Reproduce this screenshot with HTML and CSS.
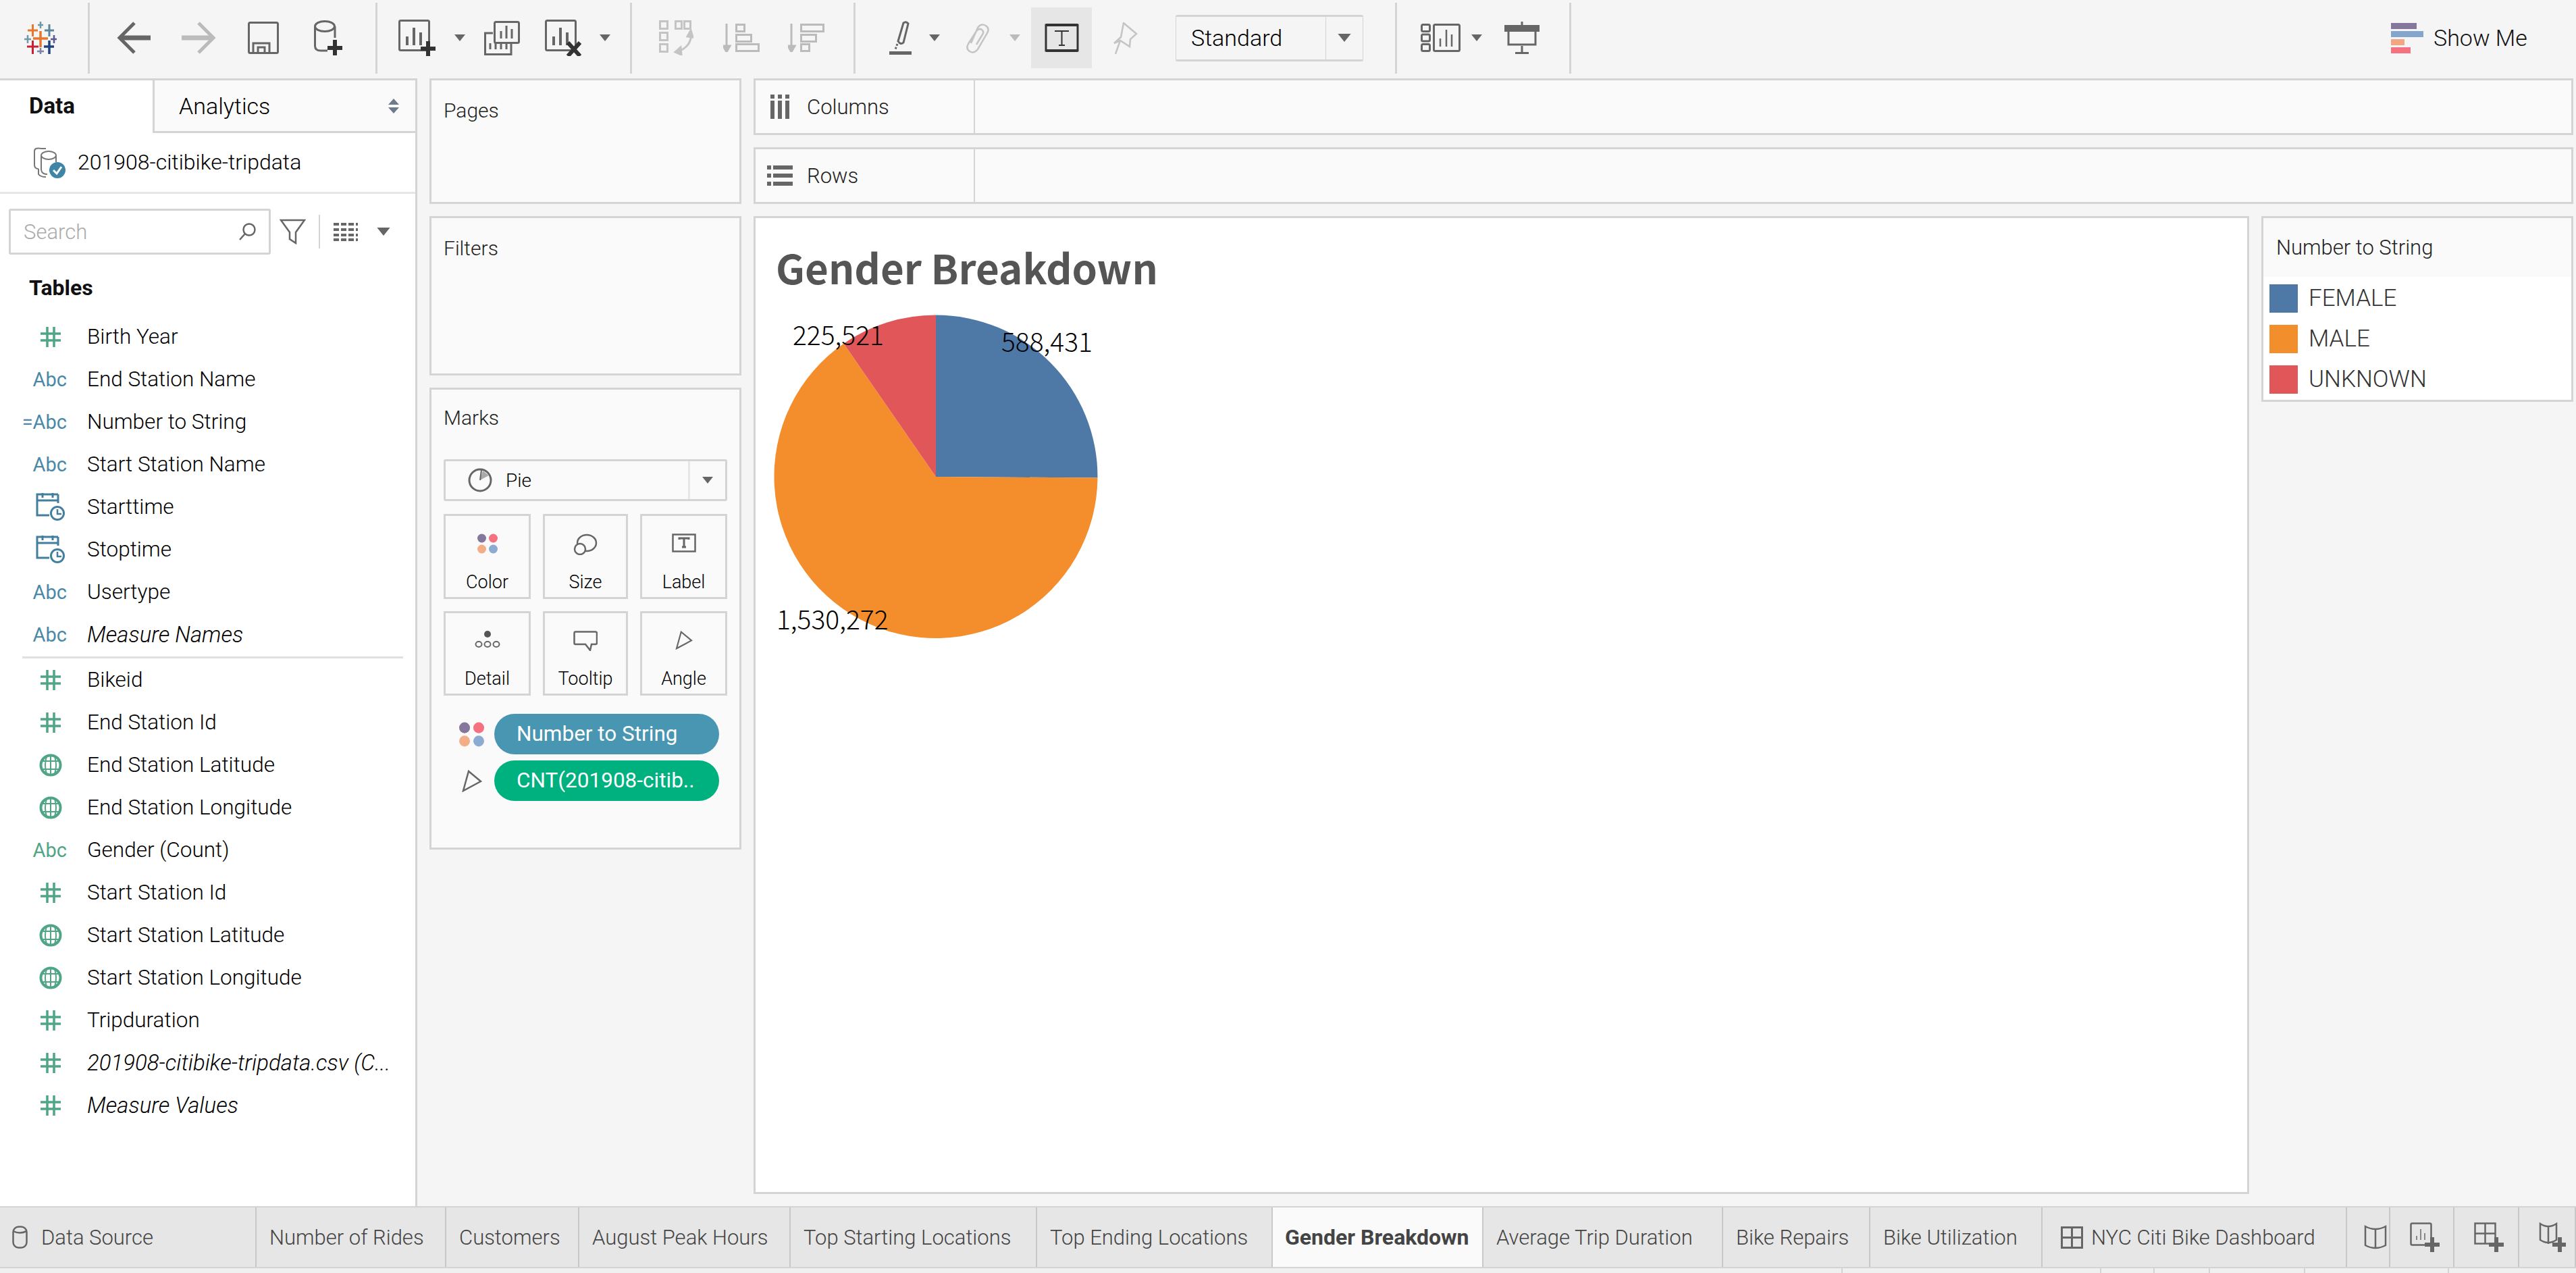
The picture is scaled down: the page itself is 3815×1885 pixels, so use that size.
FILE: index.html
```html
<!DOCTYPE html>
<html lang="en">
<head>
    <meta charset="UTF-8">
    <title>Gender Breakdown</title>
    <link rel="stylesheet" href="styles.css">
</head>
<body>

    <!-- shared icons -->
    <svg class="defs" width="0" height="0">
        <symbol id="hash" viewBox="0 0 30 30">
            <path d="M10 0V30M20 0V30M0 10H30M0 20H30" fill="none" stroke="#4fa585" stroke-width="3.5"/>
        </symbol>
        <symbol id="globe" viewBox="0 0 34 34">
            <circle cx="17" cy="17" r="14.5" fill="none" stroke="#4fa585" stroke-width="4"/>
            <path d="M3 11H31M3 23H31M17 3V31M11 4Q7 17 11 30M23 4Q27 17 23 30" fill="none" stroke="#4fa585" stroke-width="2"/>
        </symbol>
        <symbol id="cal" viewBox="0 0 44 42">
            <path d="M33 2H2V33H20M2 11H33M33 2V15M10 0V7M25 0V7" fill="none" stroke="#427f9f" stroke-width="3"/>
            <circle cx="32" cy="30" r="9.5" fill="#fff" stroke="#427f9f" stroke-width="3"/>
            <path d="M32 24V31H38" fill="none" stroke="#427f9f" stroke-width="2.5"/>
        </symbol>
        <symbol id="dots" viewBox="0 0 30 30">
            <ellipse cx="6.500" cy="7" rx="6.500" ry="6.500" fill="#85769b"/>
            <ellipse cx="23.500" cy="7" rx="6.500" ry="6.500" fill="#f6717f"/>
            <ellipse cx="6.500" cy="23" rx="6.500" ry="6.500" fill="#f3ae88"/>
            <ellipse cx="23.500" cy="23" rx="6.500" ry="6.500" fill="#8cabd0"/>
        </symbol>
        <symbol id="angle" viewBox="0 0 30 33">
            <path d="M2 31L10 2L28 17Z" fill="none" stroke="#666" stroke-width="2.500"/>
        </symbol>
        <symbol id="arrow" viewBox="0 0 16 10">
            <path d="M0 0H16L8 10Z" fill="#666"/>
        </symbol>
    </svg>

    <header class="toolbar">
        <svg class="ic" width="48" height="48" viewBox="0 0 48 48">
            <path d="M24 0V10M20 5H28" stroke="#7099a6" stroke-width="2.500"/>
            <path d="M12.500 4V22M5 13H20" stroke="#e8762c" stroke-width="3"/>
            <path d="M37 4V22M30 13H44" stroke="#5b879b" stroke-width="3"/>
            <path d="M24 14V38M13 25H35" stroke="#e8762c" stroke-width="3.500"/>
            <path d="M5 20V32M0 26H10" stroke="#7099a6" stroke-width="2.500"/>
            <path d="M44 20V32M39 26H48" stroke="#59598f" stroke-width="2.500"/>
            <path d="M12.500 28V48M4 37H21" stroke="#c72037" stroke-width="3"/>
            <path d="M37 28V48M29 37H44" stroke="#1f457e" stroke-width="3.500"/>
            <path d="M24 39V48M19 44H29" stroke="#7e84a8" stroke-width="2.500"/>
        </svg>
        <span class="sep"></span>
        <svg class="ic" width="50" height="48" viewBox="0 0 50 48">
            <path d="M26 2L4 24L26 46" fill="none" stroke="#666" stroke-width="5"/>
            <path d="M4 24H50" stroke="#666" stroke-width="7"/>
        </svg>
        <svg class="ic" width="51" height="48" viewBox="0 0 51 48">
            <path d="M25 2L47 24L25 46" fill="none" stroke="#bbb" stroke-width="5"/>
            <path d="M0 24H47" stroke="#bbb" stroke-width="7"/>
        </svg>
        <svg class="ic" width="46" height="48" viewBox="0 0 46 48">
            <rect x="1.500" y="1.500" width="43" height="45" rx="2" fill="none" stroke="#666" stroke-width="3"/>
            <path d="M8 46V32H32V46M15 46V38H25V46" fill="none" stroke="#666" stroke-width="3"/>
        </svg>
        <svg class="ic" width="42" height="52" viewBox="0 0 42 52">
            <path d="M1.500 9V38Q1.500 45 10 45H20M31 9V26" fill="none" stroke="#666" stroke-width="3"/>
            <ellipse cx="16" cy="9" rx="14.500" ry="7.500" fill="none" stroke="#666" stroke-width="3"/>
            <path d="M31 29V52M20 41H42" stroke="#333" stroke-width="6"/>
        </svg>
        <span class="sep"></span>
        <svg class="ic" width="55" height="54" viewBox="0 0 55 54">
            <rect x="1.500" y="1.500" width="44" height="44" rx="2" fill="none" stroke="#666" stroke-width="3"/>
            <path d="M13 38V25M23 38V12M33 38V19" stroke="#666" stroke-width="4"/>
            <path d="M44 32V54M33 43H55" stroke="#333" stroke-width="6"/>
        </svg>
        <svg class="ic" width="16" height="10"><use href="#arrow"/></svg>
        <svg class="ic" width="53" height="51" viewBox="0 0 53 51">
            <path d="M13 18H1.500V49.500H40V34" fill="none" stroke="#666" stroke-width="3"/>
            <path d="M9 42V33M17 42V33M25 42V33M33 42V33" stroke="#666" stroke-width="3"/>
            <rect x="15.500" y="1.500" width="36" height="31" rx="2" fill="#f5f5f5" stroke="#666" stroke-width="3"/>
            <path d="M25 26V15M33 26V7M41 26V12" stroke="#666" stroke-width="3"/>
        </svg>
        <svg class="ic" width="54" height="54" viewBox="0 0 54 54">
            <rect x="1.500" y="1.500" width="44" height="44" rx="2" fill="none" stroke="#666" stroke-width="3"/>
            <path d="M13 38V25M23 38V12M33 38V19" stroke="#666" stroke-width="4"/>
            <path d="M34 34L52 54M52 34L34 54" stroke="#333" stroke-width="6"/>
        </svg>
        <svg class="ic" width="16" height="10"><use href="#arrow"/></svg>
        <span class="sep"></span>
        <svg class="ic" width="51" height="52" viewBox="0 0 51 52" fill="none" stroke="#c4c4c4" stroke-width="3">
            <rect x="1.500" y="1.500" width="11" height="11"/>
            <rect x="1.500" y="18.500" width="11" height="11"/>
            <rect x="1.500" y="35.500" width="11" height="11"/>
            <rect x="24.500" y="1.500" width="9" height="11"/>
            <rect x="37.500" y="1.500" width="9" height="11"/>
            <path d="M47 18Q50 36 30 46"/>
            <path d="M42 24L47 15L50 25Z" fill="#c4c4c4"/>
            <path d="M32 40L24 47L33 51Z" fill="#c4c4c4"/>
        </svg>
        <svg class="ic" width="54" height="42" viewBox="0 0 54 42" fill="none" stroke="#bbb" stroke-width="3">
            <path d="M5 0V38"/>
            <path d="M0 33H10L5 42Z" fill="#bbb"/>
            <rect x="19.500" y="1.500" width="12" height="10"/>
            <rect x="19.500" y="16.500" width="22" height="10"/>
            <rect x="19.500" y="30.500" width="33" height="10"/>
        </svg>
        <svg class="ic" width="55" height="42" viewBox="0 0 55 42" fill="none" stroke="#bbb" stroke-width="3">
            <path d="M5 0V38"/>
            <path d="M0 33H10L5 42Z" fill="#bbb"/>
            <rect x="19.500" y="1.500" width="33" height="10"/>
            <rect x="19.500" y="16.500" width="22" height="10"/>
            <rect x="19.500" y="30.500" width="12" height="10"/>
        </svg>
        <span class="sep"></span>
        <svg class="ic" width="33" height="50" viewBox="0 0 33 50">
            <path d="M13 30L21 3Q25 0 28 4L21 32Q17 36 13 30Z" fill="none" stroke="#666" stroke-width="3"/>
            <path d="M12 34L9 42" stroke="#666" stroke-width="3" stroke-dasharray="3 2"/>
            <rect x="0" y="45" width="33" height="5" fill="#666"/>
        </svg>
        <svg class="ic" width="16" height="10"><use href="#arrow"/></svg>
        <svg class="ic" width="37" height="45" viewBox="0 0 37 45">
            <path d="M8 30L18 7Q23 0 30 4Q36 8 32 15L18 39Q12 46 6 42Q0 38 4 31L16 12Q20 7 24 10Q28 13 25 17L16 32" fill="none" stroke="#c4c4c4" stroke-width="2.500"/>
        </svg>
        <svg class="ic" width="16" height="10"><use class="arrow-off" href="#arrow"/></svg>
        <div class="tb-active">
            <svg width="51" height="42" viewBox="0 0 51 42">
                <rect x="2" y="2" width="47" height="38" fill="none" stroke="#333" stroke-width="3"/>
                <rect x="2" y="0" width="47" height="4" fill="#333"/>
                <rect x="2" y="38" width="47" height="4" fill="#333"/>
                <path d="M15 11H36M25.500 11V32M21 32H30" fill="none" stroke="#333" stroke-width="2"/>
            </svg>
        </div>
        <svg class="ic" width="39" height="47" viewBox="0 0 39 47">
            <path d="M17 1L36 17L27 25L26 36L12 27L3 31L13 22Z M12 27L5 47" fill="none" stroke="#c4c4c4" stroke-width="2.500"/>
        </svg>
        <div class="tb-select">
            <span class="tb-select-text">Standard</span>
            <span class="tb-select-btn"><svg width="20" height="12"><use href="#arrow"/></svg></span>
        </div>
        <span class="sep"></span>
        <svg class="ic" width="59" height="42" viewBox="0 0 59 42" fill="none" stroke="#666" stroke-width="3">
            <rect x="1.500" y="1.500" width="12" height="10" rx="2"/>
            <rect x="1.500" y="16" width="12" height="10" rx="2"/>
            <rect x="1.500" y="30.500" width="12" height="10" rx="2"/>
            <rect x="19.500" y="1.500" width="38" height="39" rx="2"/>
            <path d="M29 34V22M38 34V9M46 34V16" stroke-width="2.500"/>
        </svg>
        <svg class="ic" width="16" height="10"><use href="#arrow"/></svg>
        <svg class="ic" width="52" height="48" viewBox="0 0 52 48" fill="none" stroke="#666" stroke-width="3">
            <path d="M26 0V5M26 36V46M16 46.500H36"/>
            <rect x="0" y="5" width="52" height="10" fill="#666" stroke="none"/>
            <path d="M6 15V34H46V15"/>
        </svg>
        <span class="sep"></span>
        <div class="show-me">
            <div class="show-me-bars">
                <span class="bar bar-purple"></span>
                <span class="bar bar-blue"></span>
                <span class="bar bar-orange"></span>
                <span class="bar bar-pink"></span>
            </div>
            <span>Show Me</span>
        </div>
    </header>

    <main class="main">
        <aside class="sidebar">
            <div class="side-tabs">
                <div class="side-tab-data">Data</div>
                <div class="side-tab-analytics">
                    <span>Analytics</span>
                    <svg width="16" height="22" viewBox="0 0 16 22">
                        <path d="M8 0L16 9H0ZM8 22L0 13H16Z" fill="#6c7a8c"/>
                    </svg>
                </div>
            </div>
            <div class="source">
                <svg width="49" height="48" viewBox="0 0 49 48" fill="none" stroke="#777" stroke-width="2">
                    <path d="M3 8V28Q3 34 9 34M13 4Q3 2 3 8M20 4H13"/>
                    <ellipse cx="24" cy="14" rx="11" ry="6"/>
                    <path d="M13 14V34Q13 42 22 42M35 14V24"/>
                    <path d="M9 34V42Q12 46 20 46"/>
                    <circle cx="37" cy="36" r="12" fill="#3f86a6" stroke="none"/>
                    <path d="M31 36L36 41L43 31" stroke="#fff" stroke-width="3"/>
                </svg>
                <span>201908-citibike-tripdata</span>
            </div>
            <div class="search-row">
                <div class="search">
                    <span>Search</span>
                    <svg width="28" height="28" viewBox="0 0 28 28" fill="none" stroke="#666" stroke-width="2.500">
                        <circle cx="17" cy="11" r="8.500"/>
                        <path d="M11 17L3 26"/>
                    </svg>
                </div>
                <svg class="filter-ic" width="39" height="38" viewBox="0 0 39 38" fill="none" stroke="#666" stroke-width="2.500">
                    <path d="M2 2H37L24 20V36L15 30V20Z"/>
                </svg>
                <span class="search-sep"></span>
                <svg class="list-ic" width="36" height="28" viewBox="0 0 36 28" stroke="#666" stroke-width="4" stroke-dasharray="8 3">
                    <path d="M0 3H36M0 11H36M0 19H36M0 26H36"/>
                </svg>
                <svg class="list-arrow" width="22" height="12"><use href="#arrow"/></svg>
            </div>
            <div class="tables-title">Tables</div>
            <ul class="fields">
                <li><span class="f-icon"><svg width="30" height="30"><use href="#hash"/></svg></span>Birth Year</li>
                <li><span class="f-icon abc">Abc</span>End Station Name</li>
                <li><span class="f-icon abc">=Abc</span>Number to String</li>
                <li><span class="f-icon abc">Abc</span>Start Station Name</li>
                <li><span class="f-icon"><svg width="44" height="42"><use href="#cal"/></svg></span>Starttime</li>
                <li><span class="f-icon"><svg width="44" height="42"><use href="#cal"/></svg></span>Stoptime</li>
                <li><span class="f-icon abc">Abc</span>Usertype</li>
                <li class="calc"><span class="f-icon abc">Abc</span>Measure Names</li>
            </ul>
            <div class="fields-sep"></div>
            <ul class="fields">
                <li><span class="f-icon"><svg width="30" height="30"><use href="#hash"/></svg></span>Bikeid</li>
                <li><span class="f-icon"><svg width="30" height="30"><use href="#hash"/></svg></span>End Station Id</li>
                <li><span class="f-icon"><svg width="34" height="34"><use href="#globe"/></svg></span>End Station Latitude</li>
                <li><span class="f-icon"><svg width="34" height="34"><use href="#globe"/></svg></span>End Station Longitude</li>
                <li><span class="f-icon abc green">Abc</span>Gender (Count)</li>
                <li><span class="f-icon"><svg width="30" height="30"><use href="#hash"/></svg></span>Start Station Id</li>
                <li><span class="f-icon"><svg width="34" height="34"><use href="#globe"/></svg></span>Start Station Latitude</li>
                <li><span class="f-icon"><svg width="34" height="34"><use href="#globe"/></svg></span>Start Station Longitude</li>
                <li><span class="f-icon"><svg width="30" height="30"><use href="#hash"/></svg></span>Tripduration</li>
                <li class="calc"><span class="f-icon"><svg width="30" height="30"><use href="#hash"/></svg></span>201908-citibike-tripdata.csv (C...</li>
                <li class="calc"><span class="f-icon"><svg width="30" height="30"><use href="#hash"/></svg></span>Measure Values</li>
            </ul>
        </aside>

        <section class="cards">
            <div class="card card-pages"><div class="card-title">Pages</div></div>
            <div class="card card-filters"><div class="card-title">Filters</div></div>
            <div class="card card-marks">
                <div class="card-title marks-title">Marks</div>
                <div class="mark-select">
                    <div class="mark-select-main">
                        <svg width="36" height="36" viewBox="0 0 36 36">
                            <circle cx="18" cy="18" r="16" fill="none" stroke="#666" stroke-width="3"/>
                            <path d="M18 18L22 4L31 11Z" fill="#aaa"/>
                            <path d="M18 18L20 3" stroke="#666" stroke-width="2"/>
                        </svg>
                        <span>Pie</span>
                    </div>
                    <div class="mark-select-btn"><svg width="20" height="10"><use href="#arrow"/></svg></div>
                </div>
                <div class="mark-grid">
                    <div class="mark-btn">
                        <svg width="30" height="30"><use href="#dots"/></svg>
                        <span>Color</span>
                    </div>
                    <div class="mark-btn">
                        <svg width="36" height="32" viewBox="0 0 36 32" fill="none" stroke="#666" stroke-width="2.500">
                            <ellipse cx="20" cy="14" rx="14" ry="12"/>
                            <circle cx="10" cy="23" r="8" fill="#fafafa"/>
                        </svg>
                        <span>Size</span>
                    </div>
                    <div class="mark-btn">
                        <svg width="36" height="28" viewBox="0 0 36 28">
                            <rect x="1.500" y="1.500" width="33" height="25" fill="none" stroke="#666" stroke-width="2.500"/>
                            <path d="M11 9V7H25V9M18 7V20M15 20H21" fill="none" stroke="#666" stroke-width="3"/>
                        </svg>
                        <span>Label</span>
                    </div>
                    <div class="mark-btn">
                        <svg width="38" height="26" viewBox="0 0 38 26" fill="none" stroke="#666" stroke-width="2">
                            <circle cx="19" cy="5" r="5" fill="#555" stroke="none"/>
                            <ellipse cx="6" cy="20" rx="4.500" ry="4"/>
                            <ellipse cx="19" cy="20" rx="4.500" ry="4"/>
                            <ellipse cx="32" cy="20" rx="4.500" ry="4"/>
                        </svg>
                        <span>Detail</span>
                    </div>
                    <div class="mark-btn">
                        <svg width="36" height="30" viewBox="0 0 36 30" fill="none" stroke="#666" stroke-width="2.500">
                            <path d="M3 1.500H33Q35 1.500 35 4V18Q35 20 33 20H27L25 29L18 20H3Q1.500 20 1.500 18V4Q1.500 1.500 3 1.500Z"/>
                        </svg>
                        <span>Tooltip</span>
                    </div>
                    <div class="mark-btn">
                        <svg width="26" height="28"><use href="#angle"/></svg>
                        <span>Angle</span>
                    </div>
                </div>
                <div class="pill-row">
                    <svg width="37" height="37"><use href="#dots"/></svg>
                    <div class="pill pill-blue">Number to String</div>
                </div>
                <div class="pill-row">
                    <svg class="pill-angle" width="30" height="33"><use href="#angle"/></svg>
                    <div class="pill pill-green">CNT(201908-citib..</div>
                </div>
            </div>
        </section>

        <section class="work">
            <div class="shelf">
                <div class="shelf-head">
                    <svg width="30" height="36" viewBox="0 0 30 36">
                        <path d="M4 0V6M15 0V6M26 0V6M4 9V36M15 9V36M26 9V36" stroke="#666" stroke-width="6"/>
                    </svg>
                    <span>Columns</span>
                </div>
            </div>
            <div class="shelf">
                <div class="shelf-head">
                    <svg class="rows-ic" width="38" height="30" viewBox="0 0 38 30">
                        <path d="M0 3H6M9 3H38M0 15H6M9 15H38M0 27H6M9 27H38" stroke="#666" stroke-width="6"/>
                    </svg>
                    <span>Rows</span>
                </div>
            </div>
            <div class="work-bottom">
                <div class="view">
                    <h1>Gender Breakdown</h1>
                    <svg class="pie" width="484" height="481" viewBox="0 0 484 481">
                        <path d="M240 239L240 -0.500A239.500 239.500 0 0 1 479.500 240.500Z" fill="#4e79a7"/>
                        <path d="M240 239L479.500 240.500A239.500 239.500 0 1 1 103.500 41.800Z" fill="#f48e2c"/>
                        <path d="M240 239L103.500 41.800A239.500 239.500 0 0 1 240 -0.500Z" fill="#e15759"/>
                        <text x="28" y="44">225,521</text>
                        <text x="337" y="54">588,431</text>
                        <text x="4" y="465">1,530,272</text>
                    </svg>
                </div>
                <div class="legend">
                    <div class="legend-title">Number to String</div>
                    <ul class="legend-list">
                        <li><span class="swatch swatch-blue"></span>FEMALE</li>
                        <li><span class="swatch swatch-orange"></span>MALE</li>
                        <li><span class="swatch swatch-red"></span>UNKNOWN</li>
                    </ul>
                </div>
            </div>
        </section>
    </main>

    <nav class="tabs">
        <div class="tab tab-source">
            <svg width="23" height="34" viewBox="0 0 23 34" fill="none" stroke="#666" stroke-width="2.500">
                <rect x="1.500" y="1.500" width="20" height="31" rx="8"/>
                <path d="M1.500 8Q11 13 21.500 8"/>
            </svg>
            <span>Data Source</span>
        </div>
        <div class="tab">Number of Rides</div>
        <div class="tab">Customers</div>
        <div class="tab">August Peak Hours</div>
        <div class="tab">Top Starting Locations</div>
        <div class="tab">Top Ending Locations</div>
        <div class="tab tab-active">Gender Breakdown</div>
        <div class="tab">Average Trip Duration</div>
        <div class="tab">Bike Repairs</div>
        <div class="tab">Bike Utilization</div>
        <div class="tab tab-dash">
            <svg width="33" height="33" viewBox="0 0 33 33" fill="none" stroke="#666" stroke-width="3">
                <rect x="1.500" y="1.500" width="30" height="30"/>
                <path d="M16.500 1.500V31.500M1.500 16.500H31.500"/>
            </svg>
            <span>NYC Citi Bike Dashboard</span>
        </div>
        <div class="tab tab-book">
            <svg width="34" height="36" viewBox="0 0 34 36" fill="none" stroke="#666" stroke-width="2.500">
                <path d="M2 2Q17 10 32 2V30Q17 38 2 30ZM17 6V34"/>
            </svg>
        </div>
        <div class="tab tab-icon">
            <svg width="44" height="44" viewBox="0 0 44 44">
                <rect x="1.500" y="1.500" width="30" height="32" rx="2" fill="none" stroke="#666" stroke-width="2.500"/>
                <path d="M10 26V20M16 26V10M22 26V16" stroke="#888" stroke-width="2"/>
                <path d="M33 22V44M22 33H44" stroke="#666" stroke-width="6"/>
            </svg>
        </div>
        <div class="tab tab-icon">
            <svg width="44" height="44" viewBox="0 0 44 44">
                <rect x="1.500" y="1.500" width="30" height="30" fill="none" stroke="#666" stroke-width="2.500"/>
                <path d="M16.500 1.500V31.500M1.500 16.500H31.500" fill="none" stroke="#666" stroke-width="2.500"/>
                <path d="M33 22V44M22 33H44" stroke="#666" stroke-width="6"/>
            </svg>
        </div>
        <div class="tab tab-icon">
            <svg width="40" height="44" viewBox="0 0 40 44">
                <path d="M2 2Q14 10 26 2V26Q14 34 2 26ZM14 6V32" fill="none" stroke="#666" stroke-width="2.500"/>
                <path d="M31 22V44M20 33H40" stroke="#666" stroke-width="6"/>
            </svg>
        </div>
    </nav>

    <footer class="status">
        <span></span><span></span><span></span><span></span><span></span><span></span>
    </footer>

</body>
</html>
```

FILE: styles.css
```css
* {
    box-sizing: border-box;
}

body {
    margin: 0;
    width: 3815px;
    height: 1885px;
    overflow: hidden;
    display: flex;
    flex-direction: column;
    background-color: #f5f5f5;
    font-family: "Roboto", "Liberation Sans", sans-serif;
    font-size: 31px;
    font-weight: 300;
    color: #000;
}

ul {
    list-style: none;
    margin: 0;
    padding: 0;
}

svg {
    display: block;
    flex: none;
}

.defs {
    position: absolute;
}

/* Toolbar */
.toolbar {
    height: 116px;
    padding: 0 0 4px 36px;
    display: grid;
    grid-template-columns: 94px 43px 96px 98px 98px 91px 34px 83px 44px 90px 81px 45px 43px 95px 96px 97px 53px 59px 54px 65px 32px 120px 94px 325px 38px 75px 49px 96px 1217px auto;
    align-items: center;
}

.sep {
    display: block;
    width: 3px;
    height: 105px;
    background-color: #d4d4d4;
}

.arrow-off {
    opacity: 0.4;
}

.tb-active {
    width: 90px;
    height: 90px;
    background-color: #e6e6e6;
    display: flex;
    align-items: center;
    justify-content: center;
}

.tb-select {
    width: 278px;
    height: 69px;
    border: 1px solid #d4d4d4;
    border-top-width: 3px;
    border-bottom-width: 3px;
    border-radius: 3px;
    display: flex;
    align-items: center;
}

.tb-select-text {
    flex: 1;
    padding-left: 22px;
    font-size: 34px;
}

.tb-select-btn {
    width: 55px;
    height: 100%;
    border-left: 1px solid #d4d4d4;
    display: flex;
    align-items: center;
    justify-content: center;
}

.show-me {
    display: flex;
    align-items: center;
    gap: 15px;
    font-size: 34px;
    color: #111;
}

.show-me-bars {
    width: 48px;
    display: flex;
    flex-direction: column;
    gap: 3px;
}

.bar {
    display: block;
    height: 9px;
}

.bar-purple { width: 38px; background-color: #85769b; }
.bar-blue { width: 48px; background-color: #84a5cc; }
.bar-orange { width: 20px; background-color: #f3a682; }
.bar-pink { width: 29px; background-color: #f6717f; }

/* Layout */
.main {
    height: 1670px;
    display: flex;
    padding-right: 4px;
}

/* Data pane */
.sidebar {
    width: 618px;
    flex: none;
    background-color: #fff;
    border-top: 3px solid #d4d4d4;
    border-right: 3px solid #d4d4d4;
}

.side-tabs {
    height: 78px;
    display: flex;
}

.side-tab-data {
    width: 226px;
    padding: 18px 0 0 43px;
    font-weight: 700;
    font-size: 33px;
    color: #111;
}

.side-tab-analytics {
    flex: 1;
    padding: 0 24px 0 36px;
    border-left: 3px solid #d4d4d4;
    border-bottom: 3px solid #d4d4d4;
    background-color: #fafafa;
    display: flex;
    align-items: center;
    justify-content: space-between;
    font-size: 34px;
}

.source {
    height: 90px;
    padding: 0 0 2px 48px;
    border-bottom: 3px solid #e6e6e6;
    display: flex;
    align-items: center;
    gap: 18px;
    font-size: 32px;
}

.search-row {
    padding: 22px 0 0 13px;
    display: flex;
    align-items: center;
}

.search {
    width: 388px;
    height: 68px;
    padding: 0 18px 0 19px;
    border: 3px solid #d4d4d4;
    border-radius: 3px;
    display: flex;
    align-items: center;
    justify-content: space-between;
    color: #aaa;
    font-size: 31px;
}

.filter-ic {
    margin-left: 13px;
}

.search-sep {
    width: 2px;
    height: 50px;
    margin-left: 19px;
    background-color: #d4d4d4;
}

.list-ic {
    margin-left: 20px;
}

.list-arrow {
    margin-left: 27px;
}

.tables-title {
    height: 64px;
    margin: 17px 0 10px;
    padding-left: 43px;
    line-height: 64px;
    font-weight: 700;
    font-size: 32px;
    color: #111;
}

.fields li {
    height: 63px;
    padding-bottom: 2px;
    display: flex;
    align-items: center;
    gap: 30px;
    font-size: 31.500px;
    white-space: nowrap;
}

.fields .calc {
    font-style: italic;
    font-size: 33px;
}

.f-icon {
    width: 48px;
    margin-left: 51px;
    display: flex;
    justify-content: center;
}

.abc {
    justify-content: flex-end;
    font-style: normal;
    font-weight: 400;
    font-size: 29px;
    color: #4a88a8;
}

.green {
    color: #4fa585;
}

.fields-sep {
    height: 3px;
    margin: 0 18px 1px 33px;
    background-color: #e0e0e0;
}

/* Pages / Filters / Marks */
.cards {
    width: 462px;
    margin-left: 18px;
    flex: none;
    display: flex;
    flex-direction: column;
    gap: 18px;
}

.card {
    border: 3px solid #d4d4d4;
    background-color: #fafafa;
    padding-left: 18px;
}

.card-pages { height: 186px; }
.card-filters { height: 236px; }
.card-marks { height: 684px; }

.card-title {
    padding-top: 27px;
    font-size: 30px;
    color: #222;
}

.marks-title {
    padding-top: 24px;
}

.mark-select {
    width: 420px;
    height: 62px;
    margin-top: 44px;
    border: 3px solid #d4d4d4;
    border-radius: 3px;
    display: flex;
    font-size: 28px;
}

.mark-select-main {
    flex: 1;
    padding-left: 33px;
    display: flex;
    align-items: center;
    gap: 20px;
}

.mark-select-btn {
    width: 55px;
    border-left: 3px solid #e6e6e6;
    display: flex;
    align-items: center;
    justify-content: center;
}

.mark-grid {
    width: 420px;
    margin-top: 19px;
    display: grid;
    grid-template-columns: 129px 126px 129px;
    grid-template-rows: 126px 125px;
    gap: 18px;
}

.mark-btn {
    border: 3px solid #d4d4d4;
    padding: 26px 0 6px;
    display: flex;
    flex-direction: column;
    align-items: center;
    justify-content: space-between;
    font-size: 27px;
}

.pill-row {
    width: 408px;
    height: 60px;
    margin-bottom: 9px;
    display: flex;
    align-items: center;
    justify-content: space-between;
}

.mark-grid + .pill-row {
    margin-top: 27px;
}

.pill-row svg {
    margin-left: 23px;
}

.pill-row .pill-angle {
    margin-left: 27px;
}

.pill {
    width: 333px;
    height: 60px;
    padding-left: 33px;
    border-radius: 30px;
    line-height: 60px;
    color: #fff;
    font-weight: 400;
    font-size: 31.500px;
    white-space: nowrap;
}

.pill-blue { background-color: #4996b2; }
.pill-green { background-color: #00b180; }

/* Shelves and view */
.work {
    flex: 1;
    margin-left: 18px;
    display: flex;
    flex-direction: column;
    gap: 18px;
}

.shelf {
    height: 84px;
    border: 3px solid #d4d4d4;
    background-color: #fafafa;
}

.shelf-head {
    width: 325px;
    height: 100%;
    padding-left: 21px;
    border-right: 2px solid #d4d4d4;
    display: flex;
    align-items: center;
    gap: 25px;
    font-size: 31px;
    color: #222;
}

.rows-ic {
    margin-left: -4px;
    margin-right: -4px;
}

.work-bottom {
    height: 1448px;
    display: flex;
    align-items: flex-start;
    gap: 18px;
}

.view {
    width: 2215px;
    height: 100%;
    padding-left: 27px;
    border: 3px solid #d4d4d4;
    background-color: #fff;
}

.view h1 {
    height: 144px;
    margin: 0 0 0 3px;
    padding-top: 30px;
    font-family: "Noto Sans CJK SC", "Open Sans", sans-serif;
    font-weight: 700;
    font-size: 60px;
    line-height: 84px;
    color: #555;
}

.pie {
    overflow: visible;
}

.pie text {
    font-family: "Noto Sans CJK SC", "Open Sans", sans-serif;
    font-weight: 300;
    font-size: 39px;
    fill: #000;
}

.legend {
    width: 462px;
    height: 275px;
    border: 3px solid #d4d4d4;
    background-color: #fff;
}

.legend-title {
    height: 87px;
    padding-left: 19px;
    background-color: #fafafa;
    line-height: 87px;
    font-size: 31px;
    color: #222;
}

.legend-list {
    padding: 9px 0 0 9px;
}

.legend-list li {
    height: 60px;
    display: flex;
    gap: 16px;
    font-size: 35px;
    line-height: 46px;
    color: #333;
}

.swatch {
    width: 42px;
    height: 42px;
    margin-top: 2px;
}

.swatch-blue { background-color: #4e79a7; }
.swatch-orange { background-color: #f28e2b; }
.swatch-red { background-color: #e15759; }

/* Sheet tabs */
.tabs {
    height: 92px;
    flex: none;
    display: grid;
    grid-template-columns: 380px 281px 197px 313px 365px 349px 312px 355px 218px 255px 451px 64px 95px 96px 84px;
    border-top: 2px solid #d4d4d4;
    border-bottom: 2px solid #d4d4d4;
    background-color: #e6e6e6;
}

.tab {
    padding-left: 19px;
    border-right: 2px solid #c8c8c8;
    display: flex;
    align-items: center;
    color: #444;
    font-size: 31px;
    white-space: nowrap;
}

.tab-source {
    padding-left: 18px;
    gap: 20px;
}

.tab-dash {
    padding-left: 27px;
    gap: 12px;
}

.tab-book {
    padding-left: 25px;
}

.tab-icon {
    padding-left: 29px;
}

.tab-active {
    background-color: #fafafa;
    padding-left: 18px;
    font-weight: 700;
    font-size: 32px;
}

.status {
    flex: 1;
    display: grid;
    grid-template-columns: 2729px 383px 79px 82px 141px 213px;
    background-color: #f0f0f0;
}

.status span {
    border-right: 2px solid #d4d4d4;
}
```
